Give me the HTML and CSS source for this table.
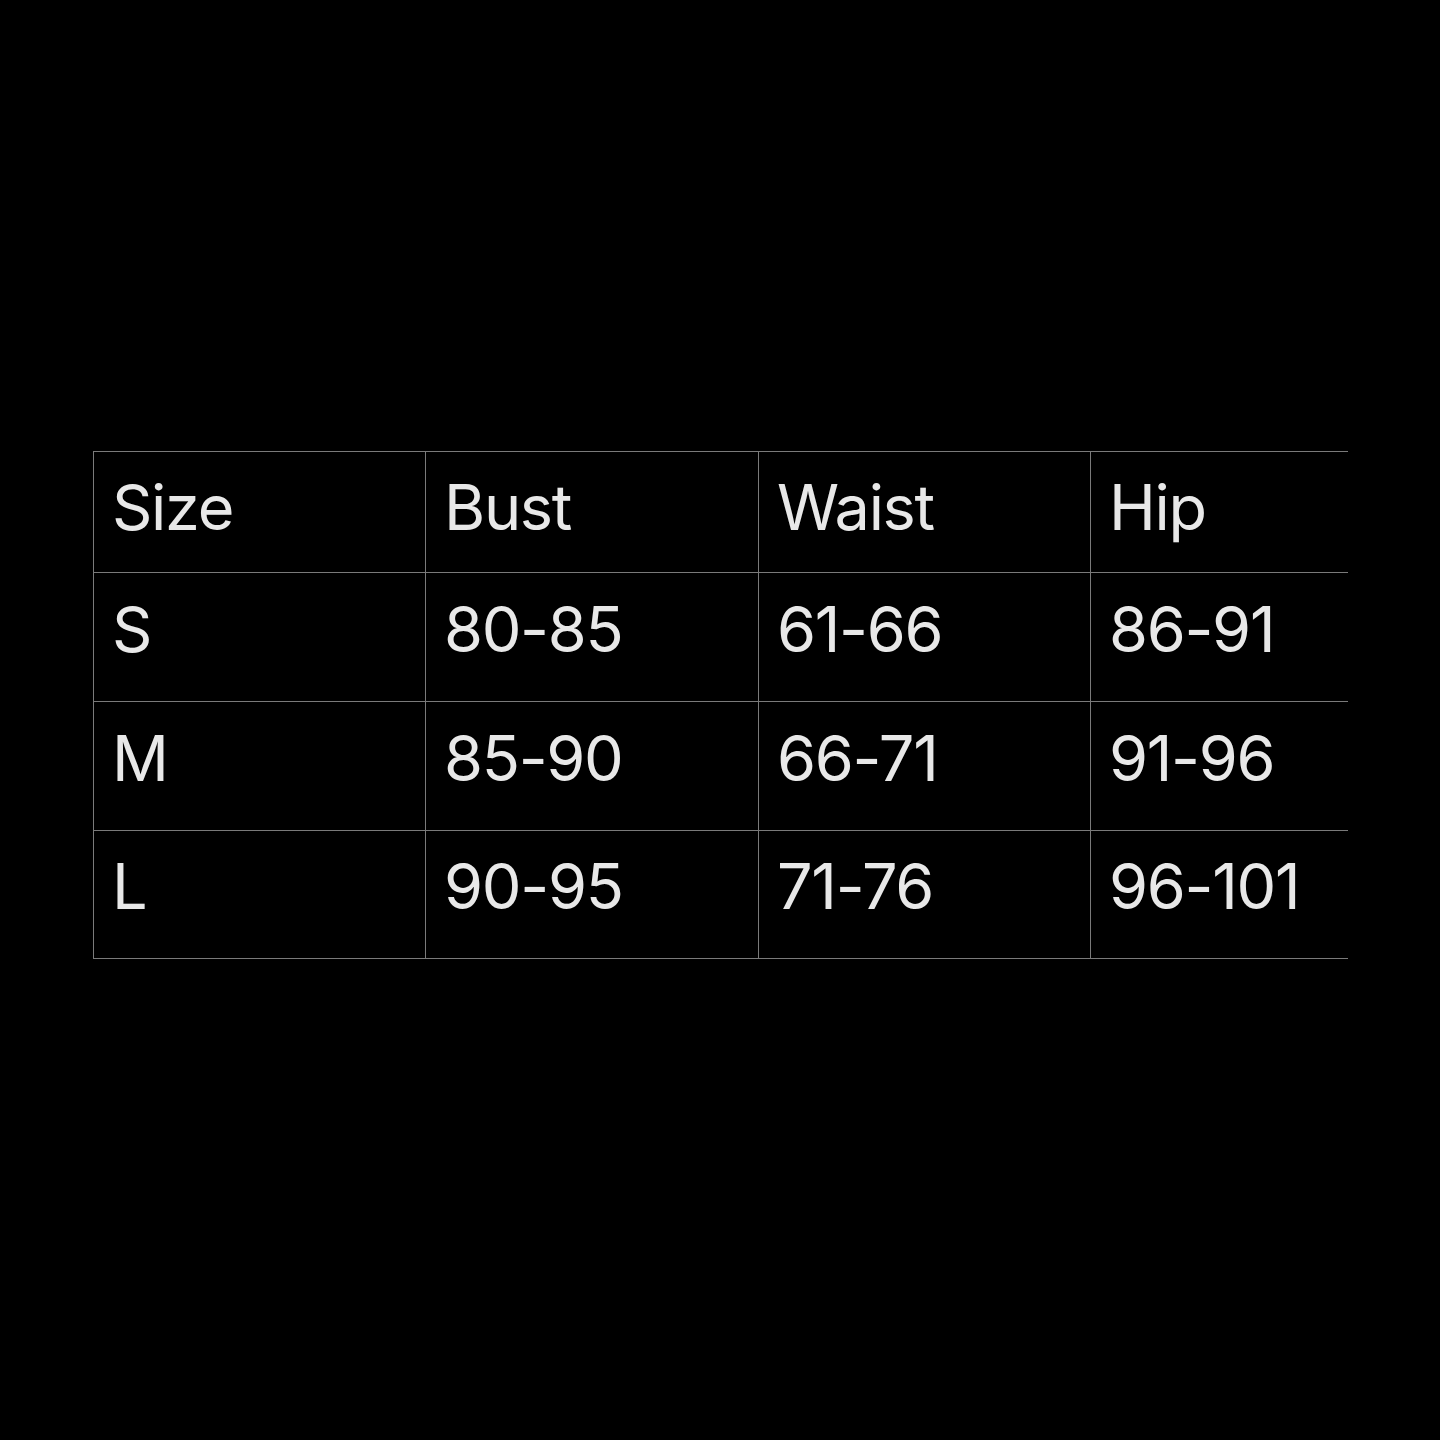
FILE: index.html
```html
<!DOCTYPE html>
<html>
<head>
<meta charset="utf-8">
<link rel="stylesheet" href="styles.css">
</head>
<body>
<div class="page">
  <div class="table">
    <div class="cell head">Size</div>
    <div class="cell head">Bust</div>
    <div class="cell head">Waist</div>
    <div class="cell head">Hip</div>
    <div class="cell">S</div>
    <div class="cell">80-85</div>
    <div class="cell">61-66</div>
    <div class="cell">86-91</div>
    <div class="cell">M</div>
    <div class="cell">85-90</div>
    <div class="cell">66-71</div>
    <div class="cell">91-96</div>
    <div class="cell last">L</div>
    <div class="cell last">90-95</div>
    <div class="cell last">71-76</div>
    <div class="cell last">96-101</div>
  </div>
</div>
</body>
</html>
```
FILE: styles.css
```css
html, body {
  margin: 0;
  background: #000;
}
.page {
  width: 1440px;
  height: 1440px;
  box-sizing: border-box;
  padding-top: 451px;
  padding-left: 93px;
}
.table {
  display: grid;
  grid-template-columns: 332px 333px 332px 258px;
  grid-template-rows: 121px 129px 129px 129px;
  font-family: Inter, "Liberation Sans", sans-serif;
  font-size: 63px;
  letter-spacing: -1.3px;
  color: #e8e8e8;
}
.cell {
  display: flex;
  align-items: center;
  padding-left: 18px;
  padding-bottom: 15px;
  border-top: 1px solid #7a7a7a;
  border-left: 1px solid #7a7a7a;
  box-sizing: border-box;
  line-height: 1.2;
}
.cell.head {
  padding-bottom: 9px;
}
.cell.last {
  border-bottom: 1px solid #7a7a7a;
}
```
